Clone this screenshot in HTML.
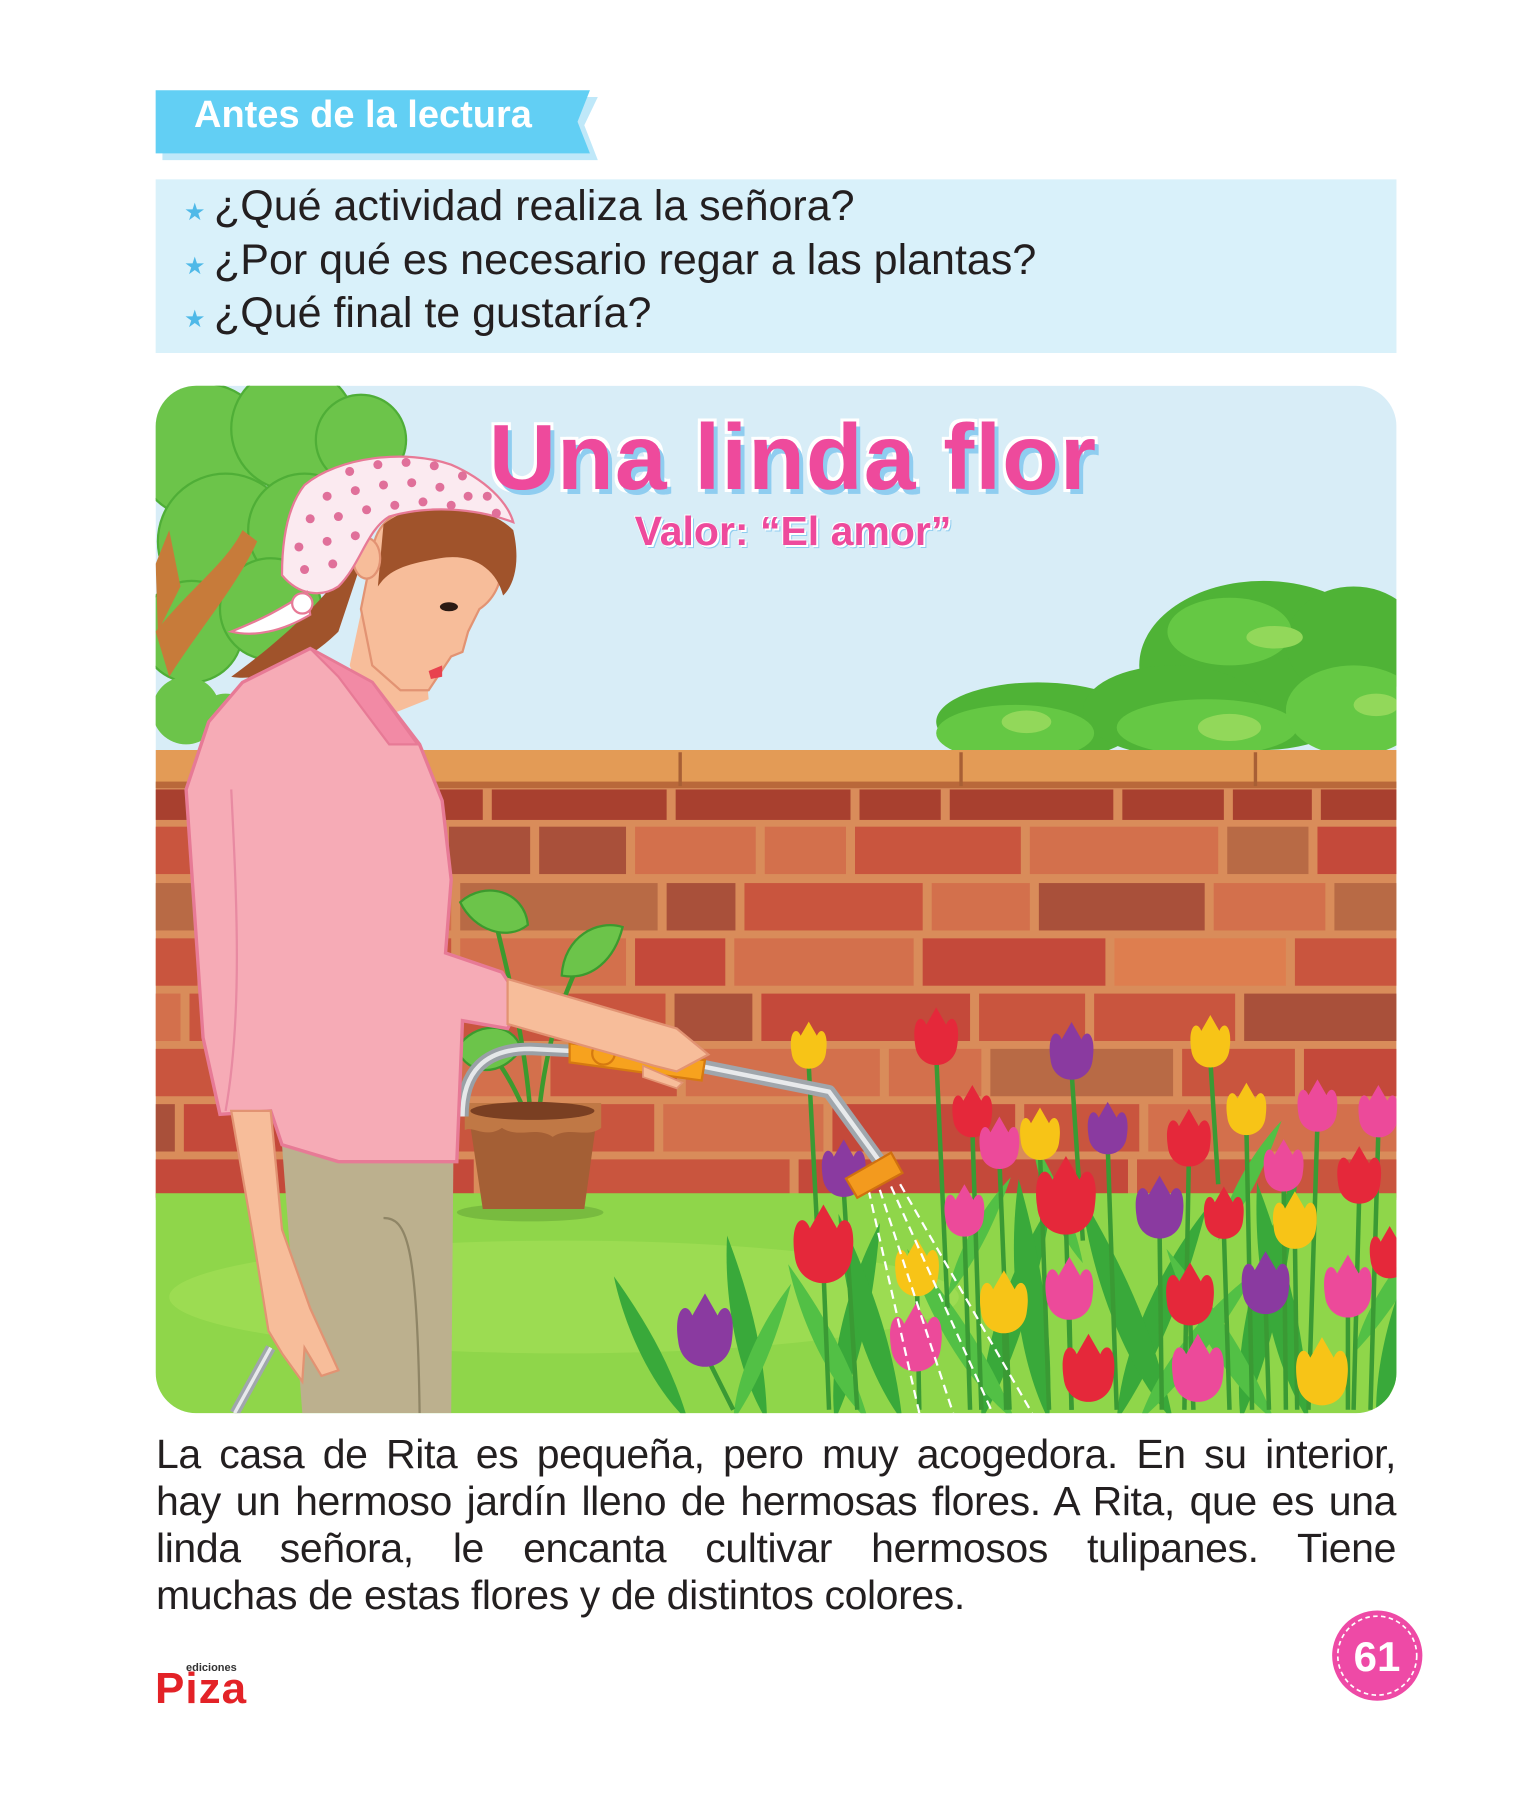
<!DOCTYPE html>
<html><head><meta charset="utf-8">
<style>
html,body{margin:0;padding:0;background:#fff;}
body{width:1516px;height:1800px;position:relative;overflow:hidden;font-family:"Liberation Sans",sans-serif;}
svg.bg{position:absolute;left:0;top:0;width:1516px;height:1800px;}
.t{position:absolute;white-space:nowrap;}
.q{position:absolute;left:214px;font-size:43px;color:#231f20;white-space:nowrap;}
.star{position:absolute;left:184px;color:#4fb9e8;font-size:24px;}
.para{position:absolute;left:156px;top:1431px;width:1240px;font-size:41px;letter-spacing:-0.4px;color:#231f20;line-height:47px;}
.para div{text-align:justify;text-align-last:justify;white-space:nowrap;}
.para div.l{text-align-last:left;}
</style></head><body>
<svg class="bg" viewBox="0 0 1344 1596" preserveAspectRatio="none" xmlns="http://www.w3.org/2000/svg">
<defs>
<clipPath id="cp"><rect x="138" y="342" width="1100" height="911" rx="36"/></clipPath>
<path id="tl" d="M-17,-8 C-20,-28 -12,-34 -8,-24 L0,-38 L8,-24 C12,-34 20,-28 17,-8 C15,14 -15,14 -17,-8Z"/>
<path id="lf" d="M0,0 C-12,-40 -4,-90 6,-120 C10,-80 10,-40 0,0Z"/>
</defs>
<polygon points="144,86 530,86 518,111 530,142 144,142" fill="#bfe8f9"/>
<polygon points="138,80 523,80 512,108 523,136 138,136" fill="#62cff4"/>
<rect x="138" y="159" width="1100" height="154" fill="#d9f1fa"/>
<g clip-path="url(#cp)">
<rect x="138" y="342" width="1100" height="911" fill="#d8edf7"/>
<g fill="#6cc44a" stroke="#4fae37" stroke-width="2">
<circle cx="180" cy="400" r="60"/><circle cx="260" cy="380" r="55"/><circle cx="320" cy="390" r="40"/>
<circle cx="200" cy="480" r="60"/><circle cx="270" cy="470" r="50"/><circle cx="170" cy="560" r="45"/><circle cx="240" cy="540" r="45"/>
</g>
<path d="M138,560 C170,520 200,500 215,470 L228,480 C210,520 175,560 150,600Z" fill="#c77b3a"/>
<path d="M138,500 L150,470 L160,520 L140,560Z" fill="#c77b3a"/>
<g fill="#6cc44a"><circle cx="165" cy="630" r="30"/><circle cx="200" cy="640" r="25"/></g>
<g fill="#4fb336">
<ellipse cx="1120" cy="590" rx="110" ry="75"/><ellipse cx="1200" cy="570" rx="60" ry="50"/>
<ellipse cx="920" cy="640" rx="90" ry="35"/><ellipse cx="1040" cy="630" rx="80" ry="40"/>
</g>
<g fill="#65c844"><ellipse cx="900" cy="650" rx="70" ry="25"/><ellipse cx="1070" cy="645" rx="80" ry="25"/><ellipse cx="1200" cy="630" rx="60" ry="40"/><ellipse cx="1090" cy="560" rx="55" ry="30"/></g>
<g fill="#92d85a"><ellipse cx="910" cy="640" rx="22" ry="10"/><ellipse cx="1090" cy="645" rx="28" ry="12"/><ellipse cx="1130" cy="565" rx="25" ry="10"/><ellipse cx="1220" cy="625" rx="20" ry="10"/></g>
<rect x="138" y="665" width="1100" height="34" fill="#e39b56"/>
<rect x="138" y="693" width="1100" height="6" fill="#b9683a"/>
<g stroke="#a85f35" stroke-width="3"><line x1="603" y1="667" x2="603" y2="697"/><line x1="852" y1="667" x2="852" y2="697"/><line x1="1113" y1="667" x2="1113" y2="697"/></g>
<rect x="138" y="699" width="1100" height="365" fill="#d98c5a"/>
<g fill="#a8402f">
<rect x="138" y="700" width="290" height="27"/><rect x="436" y="700" width="155" height="27"/><rect x="599" y="700" width="155" height="27"/><rect x="762" y="700" width="72" height="27"/><rect x="842" y="700" width="145" height="27"/><rect x="995" y="700" width="90" height="27"/><rect x="1093" y="700" width="70" height="27"/><rect x="1171" y="700" width="67" height="27"/>
</g>
<g>
<rect x="138" y="733" width="32" height="42" fill="#c9553e"/><rect x="178" y="733" width="212" height="42" fill="#c9553e"/><rect x="398" y="733" width="72" height="42" fill="#a9503a"/><rect x="478" y="733" width="77" height="42" fill="#a9503a"/><rect x="563" y="733" width="107" height="42" fill="#d3704c"/><rect x="678" y="733" width="72" height="42" fill="#d3704c"/><rect x="758" y="733" width="147" height="42" fill="#c9553e"/><rect x="913" y="733" width="167" height="42" fill="#d3704c"/><rect x="1088" y="733" width="72" height="42" fill="#b86a45"/><rect x="1168" y="733" width="70" height="42" fill="#c4493a"/>
<rect x="138" y="783" width="37" height="42" fill="#b86a45"/><rect x="183" y="783" width="217" height="42" fill="#d3704c"/><rect x="408" y="783" width="175" height="42" fill="#b86a45"/><rect x="591" y="783" width="61" height="42" fill="#a9503a"/><rect x="660" y="783" width="158" height="42" fill="#c9553e"/><rect x="826" y="783" width="87" height="42" fill="#d3704c"/><rect x="921" y="783" width="147" height="42" fill="#a9503a"/><rect x="1076" y="783" width="99" height="42" fill="#d3704c"/><rect x="1183" y="783" width="55" height="42" fill="#b86a45"/>
<rect x="138" y="832" width="37" height="42" fill="#c9553e"/><rect x="183" y="832" width="217" height="42" fill="#c9553e"/><rect x="408" y="832" width="147" height="42" fill="#d3704c"/><rect x="563" y="832" width="80" height="42" fill="#c4493a"/><rect x="651" y="832" width="159" height="42" fill="#d3704c"/><rect x="818" y="832" width="162" height="42" fill="#c4493a"/><rect x="988" y="832" width="152" height="42" fill="#de7e4f"/><rect x="1148" y="832" width="90" height="42" fill="#c9553e"/>
<rect x="138" y="881" width="22" height="42" fill="#d3704c"/><rect x="168" y="881" width="227" height="42" fill="#c9553e"/><rect x="403" y="881" width="187" height="42" fill="#c9553e"/><rect x="598" y="881" width="69" height="42" fill="#a9503a"/><rect x="675" y="881" width="185" height="42" fill="#c4493a"/><rect x="868" y="881" width="94" height="42" fill="#c9553e"/><rect x="970" y="881" width="125" height="42" fill="#c9553e"/><rect x="1103" y="881" width="135" height="42" fill="#a9503a"/>
<rect x="138" y="930" width="52" height="42" fill="#c9553e"/><rect x="198" y="930" width="282" height="42" fill="#d3704c"/><rect x="488" y="930" width="112" height="42" fill="#c9553e"/><rect x="608" y="930" width="172" height="42" fill="#d3704c"/><rect x="788" y="930" width="82" height="42" fill="#d3704c"/><rect x="878" y="930" width="162" height="42" fill="#b86a45"/><rect x="1048" y="930" width="100" height="42" fill="#c9553e"/><rect x="1156" y="930" width="82" height="42" fill="#c4493a"/>
<rect x="138" y="979" width="17" height="42" fill="#a9503a"/><rect x="163" y="979" width="137" height="42" fill="#c4493a"/><rect x="308" y="979" width="272" height="42" fill="#c9553e"/><rect x="588" y="979" width="142" height="42" fill="#d3704c"/><rect x="738" y="979" width="162" height="42" fill="#c4493a"/><rect x="908" y="979" width="102" height="42" fill="#c9553e"/><rect x="1018" y="979" width="220" height="42" fill="#d3704c"/>
<rect x="138" y="1028" width="282" height="34" fill="#c4493a"/><rect x="428" y="1028" width="272" height="34" fill="#c9553e"/><rect x="708" y="1028" width="292" height="34" fill="#c4493a"/><rect x="1008" y="1028" width="230" height="34" fill="#c9553e"/>
</g>
<rect x="138" y="1058" width="1100" height="200" fill="#8fd64a"/>
<ellipse cx="500" cy="1150" rx="350" ry="50" fill="#9cdc52"/>
<ellipse cx="470" cy="1075" rx="65" ry="8" fill="#78bb3f"/>
<g stroke="#3c9a2e" stroke-width="4" fill="none"><path d="M470,985 C465,920 450,860 435,800"/><path d="M478,985 C485,920 500,880 520,840"/><path d="M465,985 C450,950 435,930 420,920"/></g>
<g fill="#6cc44a" stroke="#3c9a2e" stroke-width="2">
<path d="M408,800 C430,780 465,790 468,820 C450,835 420,825 408,800Z"/>
<path d="M552,822 C530,815 500,830 498,865 C525,870 545,850 552,822Z"/>
<path d="M405,930 C420,905 455,905 462,930 C445,955 415,955 405,930Z"/>
<path d="M470,900 C480,880 505,885 510,905 C495,920 478,915 470,900Z"/>
</g>
<path d="M415,985 L530,985 L518,1072 L428,1072Z" fill="#a45f35"/>
<path d="M412,978 L533,978 L533,1000 C520,1010 505,998 490,1008 C475,998 460,1010 445,1000 C430,1010 420,998 412,1002Z" fill="#c07845"/>
<ellipse cx="472" cy="985" rx="55" ry="8" fill="#7a3f22"/>
<g fill="#39a93a">
<use href="#lf" transform="translate(610,1260) rotate(-30) scale(1.2)"/><use href="#lf" transform="translate(680,1260) rotate(-15) scale(1.4)"/><use href="#lf" transform="translate(740,1260) rotate(10) scale(1.5)"/><use href="#lf" transform="translate(800,1260) rotate(-20) scale(1.6)"/><use href="#lf" transform="translate(870,1260) rotate(15) scale(1.7)"/><use href="#lf" transform="translate(930,1260) rotate(-10) scale(1.8)"/><use href="#lf" transform="translate(990,1260) rotate(20) scale(1.7)"/><use href="#lf" transform="translate(1040,1260) rotate(-25) scale(1.8)"/><use href="#lf" transform="translate(1100,1260) rotate(10) scale(1.9)"/><use href="#lf" transform="translate(1160,1260) rotate(-15) scale(1.8)"/><use href="#lf" transform="translate(1220,1260) rotate(15) scale(1.9)"/>
</g>
<g fill="#52c045">
<use href="#lf" transform="translate(650,1260) rotate(20) scale(1.1)"/><use href="#lf" transform="translate(770,1260) rotate(-30) scale(1.3)"/><use href="#lf" transform="translate(900,1260) rotate(-35) scale(1.5)"/><use href="#lf" transform="translate(1010,1260) rotate(35) scale(1.4)"/><use href="#lf" transform="translate(1130,1260) rotate(-35) scale(1.5)"/><use href="#lf" transform="translate(1200,1200) rotate(30) scale(1.2)"/><use href="#lf" transform="translate(840,1150) rotate(25) scale(1)"/><use href="#lf" transform="translate(960,1120) rotate(-25) scale(1)"/><use href="#lf" transform="translate(1080,1100) rotate(25) scale(1)"/>
</g>
<g stroke="#3a9a34" stroke-width="4" fill="none">
<path d="M717,945 L725,1100"/><path d="M830,935 L840,1160"/><path d="M950,950 L960,1100"/><path d="M1073,940 L1080,1050"/><path d="M862,1000 L870,1250"/><path d="M886,1028 L895,1250"/><path d="M922,1022 L930,1250"/><path d="M982,1015 L990,1250"/><path d="M1054,1025 L1050,1250"/><path d="M1105,1000 L1110,1250"/><path d="M1168,995 L1160,1250"/><path d="M1222,1002 L1215,1250"/><path d="M1138,1048 L1140,1250"/><path d="M1205,1060 L1200,1250"/><path d="M748,1055 L760,1250"/><path d="M855,1090 L860,1250"/><path d="M945,1085 L950,1250"/><path d="M1028,1090 L1030,1250"/><path d="M1085,1092 L1090,1250"/><path d="M1148,1100 L1150,1250"/><path d="M730,1125 L735,1250"/><path d="M813,1140 L815,1250"/><path d="M890,1172 L892,1250"/><path d="M948,1160 L950,1250"/><path d="M1055,1165 L1058,1250"/><path d="M1122,1155 L1125,1250"/><path d="M1195,1158 L1195,1250"/><path d="M625,1200 L650,1250"/>
</g>
<g>
<use href="#tl" fill="#f7c417" transform="translate(717,940) scale(0.9)"/>
<use href="#tl" fill="#e5283a" transform="translate(830,935) scale(1.1)"/>
<use href="#tl" fill="#8a3aa0" transform="translate(950,948) scale(1.1)"/>
<use href="#tl" fill="#f7c417" transform="translate(1073,938)"/>
<use href="#tl" fill="#e5283a" transform="translate(862,1000)"/>
<use href="#tl" fill="#ec4a9a" transform="translate(886,1028)"/>
<use href="#tl" fill="#f7c417" transform="translate(922,1020)"/>
<use href="#tl" fill="#8a3aa0" transform="translate(982,1015)"/>
<use href="#tl" fill="#e5283a" transform="translate(1054,1025) scale(1.1)"/>
<use href="#tl" fill="#f7c417" transform="translate(1105,998)"/>
<use href="#tl" fill="#ec4a9a" transform="translate(1168,995)"/>
<use href="#tl" fill="#ec4a9a" transform="translate(1222,1000)"/>
<use href="#tl" fill="#ec4a9a" transform="translate(1138,1048)"/>
<use href="#tl" fill="#e5283a" transform="translate(1205,1058) scale(1.1)"/>
<use href="#tl" fill="#8a3aa0" transform="translate(748,1052) scale(1.1)"/>
<use href="#tl" fill="#ec4a9a" transform="translate(855,1088)"/>
<use href="#tl" fill="#e5283a" transform="translate(945,1082) scale(1.5)"/>
<use href="#tl" fill="#8a3aa0" transform="translate(1028,1088) scale(1.2)"/>
<use href="#tl" fill="#e5283a" transform="translate(1085,1090)"/>
<use href="#tl" fill="#f7c417" transform="translate(1148,1098) scale(1.1)"/>
<use href="#tl" fill="#e5283a" transform="translate(730,1125) scale(1.5)"/>
<use href="#tl" fill="#f7c417" transform="translate(813,1140) scale(1.1)"/>
<use href="#tl" fill="#f7c417" transform="translate(890,1172) scale(1.2)"/>
<use href="#tl" fill="#ec4a9a" transform="translate(948,1160) scale(1.2)"/>
<use href="#tl" fill="#e5283a" transform="translate(1055,1165) scale(1.2)"/>
<use href="#tl" fill="#8a3aa0" transform="translate(1122,1155) scale(1.2)"/>
<use href="#tl" fill="#ec4a9a" transform="translate(1195,1158) scale(1.2)"/>
<use href="#tl" fill="#e5283a" transform="translate(1232,1125)"/>
<use href="#tl" fill="#8a3aa0" transform="translate(625,1200) scale(1.4)"/>
<use href="#tl" fill="#ec4a9a" transform="translate(812,1205) scale(1.3)"/>
<use href="#tl" fill="#e5283a" transform="translate(965,1232) scale(1.3)"/>
<use href="#tl" fill="#ec4a9a" transform="translate(1062,1232) scale(1.3)"/>
<use href="#tl" fill="#f7c417" transform="translate(1172,1235) scale(1.3)"/>
</g>
<g stroke="#fff" stroke-width="2" stroke-dasharray="8,5" fill="none">
<path d="M770,1055 L815,1253"/><path d="M780,1055 L845,1253"/><path d="M790,1052 L880,1253"/><path d="M798,1050 L915,1253"/>
</g>
<path d="M410,990 C410,950 430,930 470,930 L510,932" stroke="#9aa0a6" stroke-width="11" fill="none"/>
<path d="M410,990 C410,950 430,930 470,930 L510,932" stroke="#e6e8ea" stroke-width="4" fill="none"/>
<path d="M620,945 L735,968 L780,1030" stroke="#a0a6ac" stroke-width="12" fill="none" stroke-linejoin="round"/>
<path d="M620,945 L735,968 L780,1030" stroke="#e8eaec" stroke-width="4" fill="none" stroke-linejoin="round"/>
<path d="M750,1045 L790,1022 L800,1040 L760,1062Z" fill="#f39a1e" stroke="#d0700f" stroke-width="2"/>
<path d="M505,925 L625,940 L622,958 L505,942Z" fill="#f7a21e" stroke="#d67a10" stroke-width="2"/>
<circle cx="535" cy="934" r="10" fill="#f7a21e" stroke="#d67a10" stroke-width="2"/>
<path d="M208,1253 L240,1195" stroke="#a0a6ac" stroke-width="9"/>
<path d="M208,1253 L240,1195" stroke="#e8eaec" stroke-width="3"/>
<path d="M250,1015 L402,1020 L400,1253 L268,1253 Z" fill="#bcb08e"/>
<path d="M340,1080 C360,1080 370,1100 372,1253" stroke="#8f8566" stroke-width="2" fill="none"/>
<path d="M330,470 C300,520 260,560 205,600 C230,605 270,590 300,560Z" fill="#a0532b"/>
<path d="M325,520 L375,560 L380,620 L330,640 L310,590Z" fill="#f7bd9a"/>
<path d="M215,605 L275,575 L330,605 L372,660 L392,710 L400,780 L395,845 L445,862 L462,888 L450,912 L410,905 L405,1030 L300,1030 L250,1015 L240,985 L195,988 L180,920 L165,700 L185,640 Z" fill="#f6abb6" stroke="#e77a96" stroke-width="3"/>
<path d="M275,575 L300,600 L345,660 L370,660 L330,605Z" fill="#f28aa5" stroke="#e77a96" stroke-width="2"/>
<path d="M205,700 C210,800 215,900 200,985" stroke="#e88aa2" stroke-width="2" fill="none"/>
<path d="M450,868 L600,912 L628,935 L600,950 L580,945 L450,908Z" fill="#f7bd9a" stroke="#e29373" stroke-width="2"/>
<path d="M570,945 L605,960 L600,965 L570,955Z" fill="#f7bd9a" stroke="#e29373" stroke-width="1.5"/>
<path d="M205,985 L240,985 L250,1090 L275,1160 L300,1215 L285,1220 L270,1195 L268,1225 L250,1200 L238,1180 L225,1100 Z" fill="#f7bd9a" stroke="#e29373" stroke-width="2"/>
<path d="M332,480 C340,450 380,440 420,455 C450,470 455,520 425,540 L415,560 L410,578 L400,582 L380,612 L355,612 L330,590 L320,540Z" fill="#f7bd9a" stroke="#e29373" stroke-width="2"/>
<path d="M380,595 L392,590 L392,600 L382,602Z" fill="#e8434f"/>
<ellipse cx="398" cy="538" rx="8" ry="4" fill="#2a1a14"/>
<path d="M340,465 C370,440 430,445 455,470 C462,500 455,520 446,528 C440,505 420,490 390,495 C360,500 345,505 335,520Z" fill="#a0532b"/>
<ellipse cx="325" cy="495" rx="12" ry="18" fill="#f7bd9a" stroke="#e29373" stroke-width="2"/>
<path d="M270,430 C300,405 360,398 400,412 C430,425 450,445 455,463 C420,450 380,448 345,458 C325,470 320,500 300,520 C285,530 265,528 250,510 C250,470 258,445 270,430Z" fill="#fbeaf0" stroke="#e77a96" stroke-width="2"/>
<path d="M272,525 C250,540 230,550 205,560 C225,565 250,560 275,545Z" fill="#fff" stroke="#e77a96" stroke-width="2"/>
<circle cx="268" cy="535" r="9" fill="#fff" stroke="#e77a96" stroke-width="2"/>
<g fill="#e0709a">
<circle cx="310" cy="418" r="4"/><circle cx="335" cy="412" r="4"/><circle cx="360" cy="410" r="4"/><circle cx="385" cy="413" r="4"/><circle cx="410" cy="422" r="4"/><circle cx="432" cy="440" r="4"/>
<circle cx="290" cy="440" r="4"/><circle cx="315" cy="435" r="4"/><circle cx="340" cy="430" r="4"/><circle cx="365" cy="428" r="4"/><circle cx="390" cy="432" r="4"/><circle cx="415" cy="440" r="4"/><circle cx="440" cy="455" r="4"/>
<circle cx="275" cy="460" r="4"/><circle cx="300" cy="458" r="4"/><circle cx="325" cy="452" r="4"/><circle cx="350" cy="448" r="4"/><circle cx="375" cy="445" r="4"/><circle cx="400" cy="448" r="4"/>
<circle cx="265" cy="485" r="4"/><circle cx="290" cy="480" r="4"/><circle cx="315" cy="475" r="4"/><circle cx="270" cy="505" r="4"/><circle cx="295" cy="500" r="4"/>
</g>
</g>
<circle cx="1221" cy="1468" r="40" fill="#ee4aa6"/>
<circle cx="1221" cy="1468" r="35" fill="none" stroke="#fff" stroke-width="1.5" stroke-dasharray="4,3"/>
</svg>

<div class="t" style="left:194px;top:94px;font-size:38px;font-weight:bold;color:#fff;">Antes de la lectura</div>
<div class="star" style="top:198px;">★</div><div class="q" style="top:182px;">¿Qué actividad realiza la señora?</div>
<div class="star" style="top:252px;">★</div><div class="q" style="top:236px;">¿Por qué es necesario regar a las plantas?</div>
<div class="star" style="top:305px;">★</div><div class="q" style="top:289px;">¿Qué final te gustaría?</div>

<div class="t" style="left:443px;top:404px;width:700px;text-align:center;font-size:93px;font-weight:bold;color:#ee4a9c;text-shadow:4px 5px 0 #8fcdf0,-3px -3px 0 #fff,3px -3px 0 #fff,-3px 3px 0 #fff,3px 3px 0 #fff;letter-spacing:1px;">Una linda flor</div>
<div class="t" style="left:543px;top:508px;width:500px;text-align:center;font-size:41px;font-weight:bold;color:#ee4a9c;text-shadow:2px 2px 0 #fff,-1px -1px 0 #fff,3px 3px 0 #8fcdf0;">Valor: “El amor”</div>

<div class="para">
<div>La casa de Rita es pequeña, pero muy acogedora. En su interior,</div>
<div>hay un hermoso jardín lleno de hermosas flores. A Rita, que es una</div>
<div>linda señora, le encanta cultivar hermosos tulipanes. Tiene</div>
<div class="l">muchas de estas flores y de distintos colores.</div>
</div>

<div class="t" style="left:1347px;top:1633px;width:60px;text-align:center;font-size:42px;font-weight:bold;color:#fff;">61</div>
<div class="t" style="left:186px;top:1662px;font-size:11px;font-weight:bold;color:#333;">ediciones</div>
<div class="t" style="left:155px;top:1664px;font-size:44px;font-weight:bold;color:#e32227;letter-spacing:1px;">Piza</div>
</body></html>
